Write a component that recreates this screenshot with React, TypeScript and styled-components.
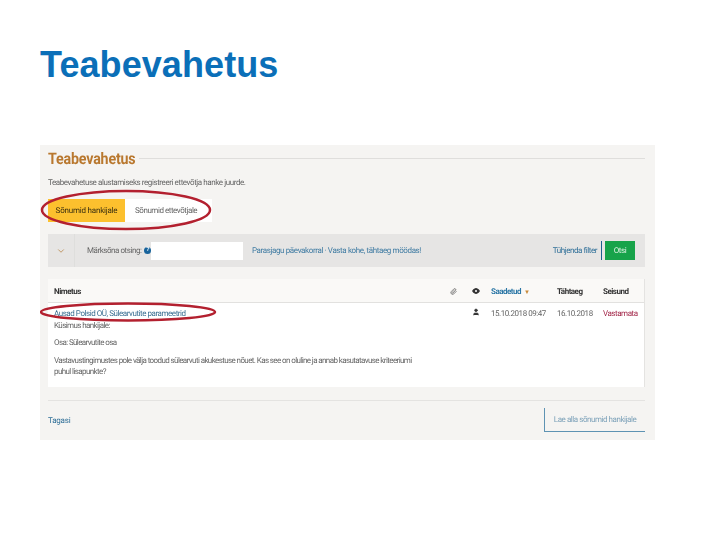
import React from "react";
import styled, { createGlobalStyle } from "styled-components";
import { Paperclip, User, ChevronDown } from "lucide-react";

const Global = createGlobalStyle`
  html, body { margin: 0; padding: 0; background: #fff; }
  body { width: 709px; height: 539px; overflow: hidden; font-family: Roboto, "Liberation Sans", sans-serif; }
`;
const Slide = styled.div`
  width: 709px; height: 539px; padding: 44px 0 0 40px; box-sizing: border-box; background: #fff;
`;
const SlideTitle = styled.h1`
  margin: 0; height: 101px; font: bold 36px/42px "Liberation Sans", Arial, sans-serif; color: #0b6fb8;
  letter-spacing: 0.08px;
`;
const Shot = styled.div`
  position: relative; width: 615px; height: 295px; background: #f5f4f2;
`;
const Content = styled.div`
  display: flex; flex-direction: column; height: 100%; box-sizing: border-box;
  padding: 5px 10px 0 8px; filter: blur(0.4px); color: #444;
  text-rendering: geometricPrecision; letter-spacing: -0.45px;
`;
const HeadingRow = styled.div`
  display: flex; align-items: center; gap: 3px; height: 17px;
`;
const Heading = styled.h2`
  margin: 0; font: bold 16px/17px Roboto, sans-serif; color: #b9782f; letter-spacing: -0.2px;
  transform: scaleX(0.89); transform-origin: left; width: 88px; white-space: nowrap;
`;
const Rule = styled.div`flex: 1; height: 1px; background: #dfdedc;`;
const Intro = styled.p`
  margin: 10px 0 0; font-size: 8px; line-height: 11px; color: #666; letter-spacing: -0.42px;
`;
const Tabs = styled.div`display: flex; margin-top: 11px; height: 23px;`;
const Tab = styled.div<{ $active?: boolean }>`
  display: flex; align-items: center; justify-content: ${p => (p.$active ? "center" : "flex-start")};
  width: ${p => (p.$active ? 77 : 87)}px; padding-left: ${p => (p.$active ? 0 : 10)}px; box-sizing: border-box; font-size: 8px;
  background: ${p => (p.$active ? "#fcc02e" : "#fff")}; color: ${p => (p.$active ? "#3a2f10" : "#666")};
  letter-spacing: ${p => (p.$active ? -0.2 : -0.45)}px;
`;
const Toolbar = styled.div`
  display: flex; align-items: center; height: 33px; margin-top: 12px; background: #e6e5e4; font-size: 8px;
`;
const ChevronCell = styled.div`
  display: flex; align-items: center; justify-content: center; width: 27px; height: 100%;
  border-right: 1px solid #dededc; color: #b98a50; box-sizing: border-box;
`;
const SearchLabel = styled.span`margin-left: 12px; color: #666; width: 57px; white-space: nowrap;`;
const HelpDot = styled.span`
  display: inline-flex; align-items: center; justify-content: center; width: 7px; height: 7px;
  border-radius: 50%; background: #17639b; color: #fff; font: bold 6px/7px "Liberation Sans", sans-serif;
`;
const SearchInput = styled.div`width: 92px; height: 18px; background: #fff;`;
const FilterLinks = styled.span`flex: 1; margin-left: 9px; color: #3f7ba2; white-space: nowrap; letter-spacing: -0.38px;`;
const ClearLink = styled.span`color: #2f6f98;`;
const Divider = styled.div`width: 1px; height: 19px; margin: 0 3px 0 4px; background: #1d5f8e;`;
const SearchButton = styled.div`
  display: flex; align-items: center; justify-content: center; width: 30px; height: 19px; margin-right: 10px;
  background: #17a34a; color: #dff3e5; font-size: 8px;
`;
const Table = styled.div`
  display: flex; flex-direction: column; height: 108px; margin-top: 12px; background: #fff;
  border-right: 1px solid #e4e3e1;
`;
const cols = "1fr 22px 19px 66px 46px 41px";
const HeaderRow = styled.div`
  display: grid; grid-template-columns: ${cols}; align-items: center; height: 24px; padding: 1px 0 0 6px;
  background: #faf9f7; border-bottom: 1px solid #e2e1df; box-sizing: border-box;
  font-size: 8px; font-weight: 700; color: #333; letter-spacing: -0.5px;
`;
const SortHead = styled.span`color: #2c77a6;`;
const SortMark = styled.span`color: #c98b3c; font-size: 6px; margin-left: 3px;`;
const BodyRow = styled.div`
  display: grid; grid-template-columns: ${cols}; padding: 5px 0 0 6px; font-size: 8px; line-height: 11.500px; color: #666;
`;
const Subject = styled.div`color: #3a6f92;`;
const Para = styled.p`margin: 6px 0 0; width: 358px; letter-spacing: -0.6px;`;
const Ask = styled.div`color: #666; letter-spacing: -0.6px;`;
const Status = styled.span`color: #a3284a; white-space: nowrap;`;
const Cell = styled.span`white-space: nowrap;`;
const IconCell = styled.span`display: flex; color: #444;`;
const FootRule = styled.div`height: 1px; margin-top: 13px; background: #e4e3e1;`;
const Footer = styled.div`
  display: flex; align-items: center; justify-content: space-between; margin-top: 7px; height: 24px; font-size: 8px;
`;
const BackLink = styled.span`color: #2f6f98; letter-spacing: -0.2px;`;
const Download = styled.div`
  display: flex; align-items: center; justify-content: center; width: 101px; height: 24px; box-sizing: border-box;
  border-left: 1px solid #5e93b3; border-bottom: 1px solid #5e93b3; color: #7fa3ba;
`;
const Marks = styled.svg`position: absolute; inset: 0; pointer-events: none;`;

export default function App() {
  return (
    <Slide>
      <Global />
      <SlideTitle>Teabevahetus</SlideTitle>
      <Shot>
        <Content>
          <HeadingRow>
            <Heading>Teabevahetus</Heading>
            <Rule />
          </HeadingRow>
          <Intro>Teabevahetuse alustamiseks registreeri ettevõtja hanke juurde.</Intro>
          <Tabs>
            <Tab $active>Sõnumid hankijale</Tab>
            <Tab>Sõnumid ettevõtjale</Tab>
          </Tabs>
          <Toolbar>
            <ChevronCell><ChevronDown size={10} /></ChevronCell>
            <SearchLabel>Märksõna otsing:</SearchLabel>
            <HelpDot>?</HelpDot>
            <SearchInput />
            <FilterLinks>Parasjagu päevakorral · Vasta kohe, tähtaeg möödas!</FilterLinks>
            <ClearLink>Tühjenda filter</ClearLink>
            <Divider />
            <SearchButton>Otsi</SearchButton>
          </Toolbar>
          <Table>
            <HeaderRow>
              <span>Nimetus</span>
              <IconCell><Paperclip size={7} /></IconCell>
              <IconCell>
                <svg width="8" height="6" viewBox="0 0 8 6">
                  <path d="M0 3C1.500 .8 2.800 0 4 0s2.500 .8 4 3C6.500 5.200 5.200 6 4 6S1.500 5.200 0 3z" fill="#333" />
                  <circle cx="4" cy="3" r="1" fill="#fff" />
                </svg>
              </IconCell>
              <SortHead>Saadetud<SortMark>▼</SortMark></SortHead>
              <span>Tähtaeg</span>
              <span>Seisund</span>
            </HeaderRow>
            <BodyRow>
              <div>
                <Subject>Ausad Polsid OÜ, Sülearvutite parameetrid</Subject>
                <Ask>Küsimus hankijale:</Ask>
                <Para>Osa: Sülearvutite osa</Para>
                <Para>Vastavustingimustes pole välja toodud sülearvuti akukestuse nõuet. Kas see on oluline ja annab kasutatavuse kriteeriumi puhul lisapunkte?</Para>
              </div>
              <span />
              <IconCell><User size={8} fill="#333" /></IconCell>
              <Cell>15.10.2018 09:47</Cell>
              <Cell>16.10.2018</Cell>
              <Status>Vastamata</Status>
            </BodyRow>
          </Table>
          <FootRule />
          <Footer>
            <BackLink>Tagasi</BackLink>
            <Download>Lae alla sõnumid hankijale</Download>
          </Footer>
        </Content>
        <Marks width="615" height="295" viewBox="0 0 615 295">
          <ellipse cx="86" cy="65" rx="84" ry="19" fill="none" stroke="#b3202f" strokeWidth="2.5" />
          <ellipse cx="88" cy="167" rx="87" ry="8.500" fill="none" stroke="#b3202f" strokeWidth="2.5" />
        </Marks>
      </Shot>
    </Slide>
  );
}
